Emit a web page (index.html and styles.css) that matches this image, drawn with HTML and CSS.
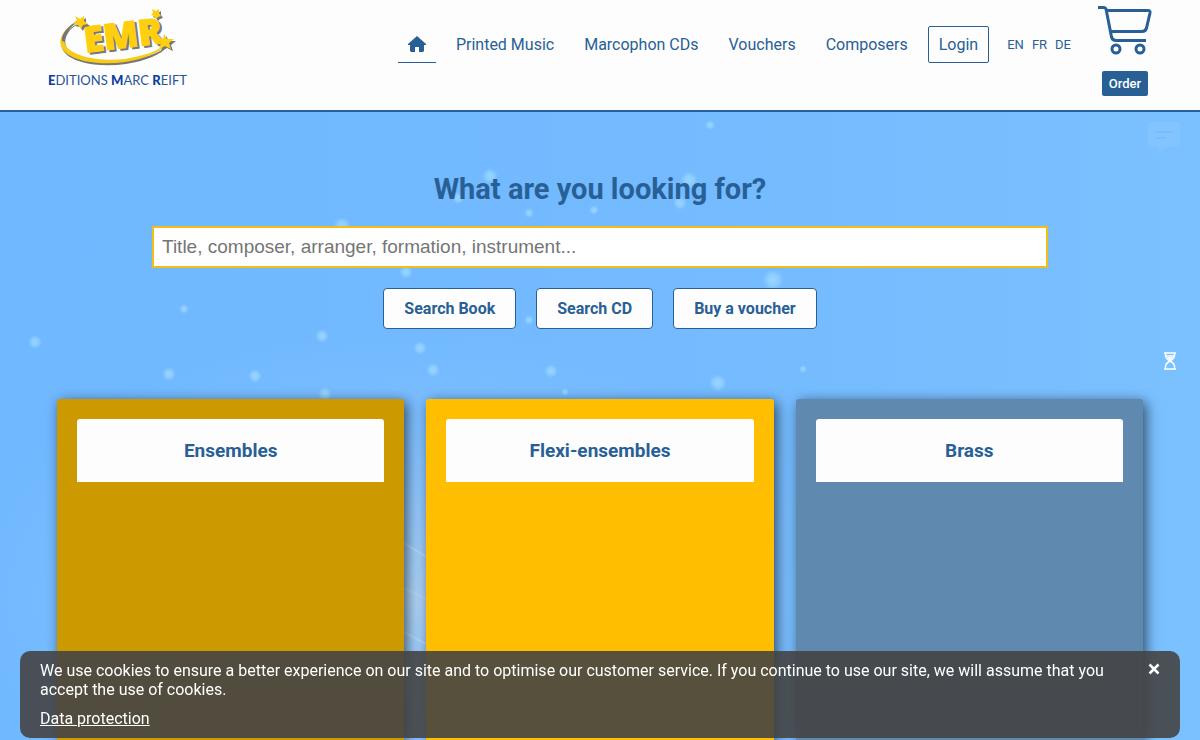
FILE: index.html
```html
<!DOCTYPE html>
<html lang="en">
<head>
<meta charset="utf-8">
<title>Editions Marc Reift</title>
<link rel="stylesheet" href="styles.css">
</head>
<body>
<header class="header">
  <a class="logo" href="#" aria-label="Editions Marc Reift">
    <svg class="logo-mark" viewBox="0 0 120 62" width="120" height="62" aria-hidden="true">
      <path d="M22 12C8 18 0 29 3 38C8 52 37 58 67 54C86 51 102 45 109 36C99 44 84 48 67 51C40 54 12 48 7 36C4 28 10 18 22 12Z" fill="#777" transform="translate(1 2)"/>
      <path d="M22 12C8 18 0 29 3 38C8 52 37 58 67 54C86 51 102 45 109 36C99 44 84 48 67 51C40 54 12 48 7 36C4 28 10 18 22 12Z" fill="#f8cb14"/>
      <path d="M20 12C9 19 3 26 4 33L7 34C6 26 12 18 22 13Z" fill="#777"/>
      <g transform="rotate(-7 65 30)">
        <text class="logo-shade" x="28" y="42">EMR</text>
        <text class="logo-letters" x="26" y="40">EMR</text>
      </g>
      <g fill="#777" transform="translate(2 2)">
        <path d="M17 8L22 11L26 8L26 13L30 16L25 17L23 21L20 17L15 16L19 13Z"/>
        <path d="M94 1L98 3L101 1L101 5L103 8L100 9L98 11L96 8L93 7L95 5Z"/>
        <path d="M106 26L109 31L116 31L111 35L113 41L107 38L101 41L103 35L99 31L105 31Z"/>
      </g>
      <g fill="#ffcf0d">
        <path d="M17 8L22 11L26 8L26 13L30 16L25 17L23 21L20 17L15 16L19 13Z"/>
        <path d="M94 1L98 3L101 1L101 5L103 8L100 9L98 11L96 8L93 7L95 5Z"/>
        <path d="M106 26L109 31L116 31L111 35L113 41L107 38L101 41L103 35L99 31L105 31Z"/>
      </g>
    </svg>
    <span class="logo-name"><b>E</b>DITIONS <b>M</b>ARC <b>R</b>EIFT</span>
  </a>
  <div class="header-right">
    <nav class="nav" aria-label="Main">
      <a class="nav-link nav-home" href="#" aria-label="Home">
        <svg viewBox="0 0 18 16" width="18" height="16" aria-hidden="true"><path d="M9 0L18 8V9H16V15L15 16H11V11H7V16H3L2 15V9H0V8Z" fill="currentColor"/></svg>
      </a>
      <a class="nav-link" href="#">Printed Music</a>
      <a class="nav-link" href="#">Marcophon CDs</a>
      <a class="nav-link" href="#">Vouchers</a>
      <a class="nav-link" href="#">Composers</a>
      <a class="nav-link nav-login" href="#">Login</a>
    </nav>
    <div class="languages"><a href="#">EN</a><a href="#">FR</a><a href="#">DE</a></div>
    <div class="cart">
      <svg viewBox="0 0 54 50" width="54" height="50" fill="none" stroke="currentColor" stroke-width="3" aria-hidden="true">
        <path d="M0 2.500H6Q7.500 2.500 8 4L13.500 32Q14.500 35.500 18 35.500H48"/>
        <path d="M8.500 5.500H50Q52.500 5.500 52 8L48.500 23Q47.500 26.500 44 26.500H13"/>
        <circle cx="18" cy="44" r="4"/><circle cx="42" cy="44" r="4"/>
      </svg>
      <button class="order" type="button">Order</button>
    </div>
  </div>
</header>

<main class="main">
  <svg class="backdrop" viewBox="0 112 1200 628" preserveAspectRatio="xMidYMin slice" aria-hidden="true">
    <defs>
      <linearGradient id="sky"><stop offset="0" stop-color="#70b8ff"/><stop offset=".55" stop-color="#73baff"/><stop offset="1" stop-color="#7bc1ff"/></linearGradient>
      <radialGradient id="glow"><stop offset="0" stop-color="#afd3f5"/><stop offset=".5" stop-color="#96caff" stop-opacity=".6"/><stop offset="1" stop-color="#80c0ff" stop-opacity="0"/></radialGradient>
      <radialGradient id="dot"><stop offset="0" stop-color="#a2dcff" stop-opacity=".8"/><stop offset=".5" stop-color="#9bd7ff" stop-opacity=".65"/><stop offset="1" stop-color="#90d0ff" stop-opacity="0"/></radialGradient>
    </defs>
    <rect width="1200" height="740" fill="url(#sky)"/>
    <ellipse cx="415" cy="600" rx="460" ry="270" fill="url(#glow)"/>
    <g fill="url(#dot)">
      <circle cx="710" cy="125" r="5"/><circle cx="490" cy="176" r="8"/><circle cx="689" cy="180" r="9"/>
      <circle cx="458" cy="198" r="6"/><circle cx="680" cy="203" r="7"/><circle cx="594" cy="210" r="5"/>
      <circle cx="529" cy="213" r="5"/><circle cx="342" cy="226" r="9"/><circle cx="406" cy="272" r="7"/>
      <circle cx="773" cy="280" r="11"/><circle cx="184" cy="309" r="5"/><circle cx="529" cy="320" r="5"/>
      <circle cx="35" cy="342" r="7"/><circle cx="322" cy="336" r="7"/><circle cx="420" cy="348" r="7"/>
      <circle cx="169" cy="374" r="7"/><circle cx="255" cy="376" r="7"/><circle cx="433" cy="370" r="7"/>
      <circle cx="551" cy="371" r="7"/><circle cx="718" cy="383" r="9"/><circle cx="803" cy="369" r="4"/>
      <circle cx="325" cy="394" r="7"/><circle cx="565" cy="392" r="4"/>
    </g>
    <path d="M404 543L428 558M404 588L428 600M404 632L428 645" stroke="#b3d9f5" stroke-width="2"/>
  </svg>

  <form class="search">
    <h1 class="search-title"><label for="query">What are you looking for?</label></h1>
    <input class="search-input" id="query" type="text" placeholder="Title, composer, arranger, formation, instrument...">
    <div class="search-actions">
      <button class="button" type="button">Search Book</button>
      <button class="button" type="button">Search CD</button>
      <button class="button" type="button">Buy a voucher</button>
    </div>
  </form>

  <section class="cards">
    <article class="card card-ochre"><h2 class="card-title">Ensembles</h2></article>
    <article class="card card-yellow"><h2 class="card-title">Flexi-ensembles</h2></article>
    <article class="card card-blue"><h2 class="card-title">Brass</h2></article>
  </section>
</main>

<button class="chat" type="button" aria-label="Messages">
  <svg viewBox="0 0 32 32" width="32" height="32" aria-hidden="true"><path d="M3 0H29Q32 0 32 3V22Q32 25 29 25H18L11 32V25H3Q0 25 0 22V3Q0 0 3 0Z" fill="#82c4ff"/><path d="M8 10H24M8 16H18" stroke="#78bdfa" stroke-width="2"/></svg>
</button>
<svg class="hourglass" viewBox="0 0 14 18" width="14" height="18" fill="none" stroke="#fff" stroke-width="1.500" aria-hidden="true">
  <path d="M1 1H13M1 17H13M2.500 1V4Q3 7 7 9Q11 7 11.500 4V1M2.500 17V14Q3 11 7 9Q11 11 11.500 14V17M3 4H11"/><path d="M4 5H10L7 9Z" fill="#fff" stroke="none"/>
</svg>

<aside class="cookies" aria-label="Cookies">
  <div class="cookies-body">
    <p class="cookies-text">We use cookies to ensure a better experience on our site and to optimise our customer service. If you continue to use our site, we will assume that you accept the use of cookies.</p>
    <a href="#">Data protection</a>
  </div>
  <button class="cookies-close" type="button" aria-label="Close">
    <svg viewBox="0 0 12 12" width="12" height="12" aria-hidden="true"><path d="M1.500 1.500L10.500 10.500M10.500 1.500L1.500 10.500" stroke="#fff" stroke-width="2.500"/></svg>
  </button>
</aside>
</body>
</html>
```
FILE: styles.css
```css
:root {
  --blue: #286096;
  --paper: #fdfdfd;
}

* { box-sizing: border-box; }

body {
  display: flex;
  flex-direction: column;
  min-height: 100vh;
  margin: 0;
  font: 16px/19px Roboto, "Liberation Sans", sans-serif;
  color: var(--blue);
  background: #74bbff;
}

a { color: inherit; text-decoration: none; }
button { font: inherit; cursor: pointer; }
svg { display: block; }

/* Header */
.header {
  position: sticky;
  top: 0;
  z-index: 2;
  display: flex;
  justify-content: space-between;
  min-height: 112px;
  padding: 0 48px;
  background: var(--paper);
  border-bottom: 2px solid var(--blue);
}
.logo { padding-top: 8px; }
.logo-mark { margin-left: 10px; overflow: visible; }
.logo-letters, .logo-shade {
  font: 800 36px "Open Sans", sans-serif;
  fill: #ffcf0d;
  stroke: #ffcf0d;
  stroke-width: 1px;
}
.logo-shade { fill: #777; stroke: #777; }
.logo-name {
  display: block;
  font: 13px/20px Lato, sans-serif;
  color: #27549b;
}
.logo-name b { font-weight: 900; color: #0a3f9c; }

.header-right { display: flex; align-items: flex-start; }
.nav { display: flex; gap: 10px; padding-top: 26px; }
.nav-link { padding: 9px 10px; }
.nav-home {
  display: flex;
  align-items: center;
  border-bottom: 1px solid var(--blue);
}
.nav-login {
  padding: 8px 10px;
  border: 1px solid var(--blue);
  border-radius: 2px;
}
.languages {
  display: flex;
  gap: 8px;
  padding: 35px 27px 0 18px;
  font-size: 13px;
}
.cart {
  display: flex;
  flex-direction: column;
  align-items: center;
  gap: 16px;
  padding-top: 5px;
}
.order {
  padding: 3px 7px;
  font-size: 13px;
  font-weight: 500;
  color: #fff;
  background: var(--blue);
  border: 0;
  border-radius: 2px;
}

/* Search */
.main {
  position: relative;
  z-index: 0;
  display: flex;
  flex: 1;
  flex-direction: column;
  overflow: hidden;
}
.backdrop {
  position: absolute;
  inset: 0;
  z-index: -1;
  width: 100%;
  height: 100%;
}
.search {
  display: flex;
  flex-direction: column;
  align-items: center;
  padding: 60px 152px 70px;
}
.search-title { margin: 0 0 20px; font-size: 29px; line-height: 34px; }
.search-input {
  width: 100%;
  height: 42px;
  padding: 0 8px;
  font: 19px "Liberation Sans", sans-serif;
  color: #333;
  background: #fff;
  border: 2px solid #f3bd14;
  border-radius: 0;
}
.search-input::placeholder { color: #757575; }
.search-actions { display: flex; gap: 20px; margin-top: 20px; }
.button {
  padding: 10px 20px;
  font-weight: 700;
  color: var(--blue);
  background: var(--paper);
  border: 1px solid var(--blue);
  border-radius: 4px;
}

/* Cards */
.cards {
  display: grid;
  flex: 1;
  grid-template-columns: repeat(3, 1fr);
  gap: 22px;
  padding: 0 57px;
}
.card {
  min-height: 300px;
  padding: 20px;
  border-radius: 3px 3px 0 0;
  box-shadow: 3px 3px 13px rgba(0, 0, 0, .6);
}
.card-ochre { background: #cc9900; }
.card-yellow { background: #ffbf00; }
.card-blue { background: #5f89af; }
.card-title {
  margin: 0;
  padding: 20px;
  font-size: 19px;
  line-height: 23px;
  text-align: center;
  background: var(--paper);
  border-radius: 3px 3px 0 0;
}

/* Floating items */
.chat {
  position: fixed;
  top: 122px;
  right: 20px;
  padding: 0;
  background: none;
  border: 0;
}
.hourglass { position: fixed; top: 352px; right: 23px; }
.cookies {
  position: fixed;
  right: 20px;
  bottom: 2px;
  left: 20px;
  z-index: 3;
  display: flex;
  gap: 30px;
  padding: 10px 20px;
  color: #fff;
  background: rgba(68, 68, 68, .9);
  border-radius: 10px;
}
.cookies-body { flex: 1; }
.cookies-body a { text-decoration: underline; }
.cookies-text { margin: 0 0 10px; }
.cookies-close {
  align-self: flex-start;
  padding: 2px 0;
  background: none;
  border: 0;
}
```
